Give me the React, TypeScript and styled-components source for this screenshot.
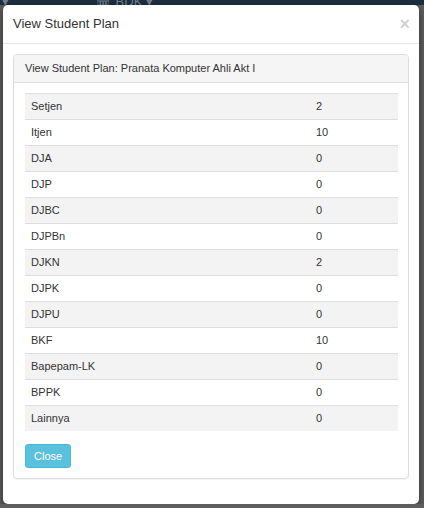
import styled, { createGlobalStyle } from 'styled-components';

const rows: { name: string; value: number }[] = [
  { name: 'Setjen', value: 2 },
  { name: 'Itjen', value: 10 },
  { name: 'DJA', value: 0 },
  { name: 'DJP', value: 0 },
  { name: 'DJBC', value: 0 },
  { name: 'DJPBn', value: 0 },
  { name: 'DJKN', value: 2 },
  { name: 'DJPK', value: 0 },
  { name: 'DJPU', value: 0 },
  { name: 'BKF', value: 10 },
  { name: 'Bapepam-LK', value: 0 },
  { name: 'BPPK', value: 0 },
  { name: 'Lainnya', value: 0 },
];

function App() {
  return (
    <>
      <GlobalStyle />
      <Navbar>
        <NavItem>▾</NavItem>
        <NavItem>🏛 BDK ▾</NavItem>
      </Navbar>
      <Modal>
        <Header>
          <Title>View Student Plan</Title>
          <CloseX>×</CloseX>
        </Header>
        <Body>
          <Panel>
            <PanelHeading>View Student Plan: Pranata Komputer Ahli Akt I</PanelHeading>
            <PanelBody>
              <Table>
                <tbody>
                  {rows.map((r, i) => (
                    <Row key={r.name} $striped={i % 2 === 0}>
                      <NameCell>{r.name}</NameCell>
                      <Cell>{r.value}</Cell>
                    </Row>
                  ))}
                </tbody>
              </Table>
              <Button>Close</Button>
            </PanelBody>
          </Panel>
        </Body>
      </Modal>
    </>
  );
}

export default App;

const GlobalStyle = createGlobalStyle`
  html, body {
    margin: 0;
    padding: 0;
    background-color: #5e5e5e;
    font-family: "Liberation Sans", Arial, sans-serif;
    color: #333;
  }
`;

const Navbar = styled.div`
  height: 5px;
  background-color: #1c2f40;
  display: flex;
  align-items: flex-end;
  gap: 86px;
  overflow: hidden;
  padding-left: 2px;
`;

const NavItem = styled.div`
  font-size: 13px;
  line-height: 6px;
  color: #6f7c88;
  white-space: nowrap;
`;

const Modal = styled.div`
  margin: 0 5px 0 3px;
  background-color: #fff;
  border-radius: 5px;
  box-shadow: 0 3px 9px rgba(0, 0, 0, 0.5);
  height: 499px;
  box-sizing: border-box;
  overflow: hidden;
`;

const Header = styled.div`
  display: flex;
  justify-content: space-between;
  align-items: flex-start;
  padding: 10px 9px 10px 10px;
  border-bottom: 1px solid #e5e5e5;
`;

const Title = styled.div`
  font-size: 13px;
  line-height: 18px;
  color: #333;
`;

const CloseX = styled.div`
  font-size: 18px;
  font-weight: bold;
  line-height: 14px;
  color: rgba(0, 0, 0, 0.2);
  margin-top: 2px;
`;

const Body = styled.div`
  padding: 10px;
`;

const Panel = styled.div`
  border: 1px solid #ddd;
  border-radius: 4px;
  box-shadow: 0 1px 1px rgba(0, 0, 0, 0.05);
`;

const PanelHeading = styled.div`
  background-color: #f5f5f5;
  border-bottom: 1px solid #ddd;
  border-radius: 3px 3px 0 0;
  padding: 6px 11px;
  font-size: 11px;
  line-height: 15px;
  color: #333;
`;

const PanelBody = styled.div`
  padding: 10px 10px 10px 11px;
`;

const Table = styled.table`
  width: 100%;
  border-collapse: collapse;
  font-size: 11px;
  margin-bottom: 13px;
`;

const Row = styled.tr<{ $striped: boolean }>`
  background-color: ${(p) => (p.$striped ? '#f3f3f4' : '#fff')};
`;

const Cell = styled.td`
  padding: 5px;
  line-height: 15px;
  border-top: 1px solid #ddd;
  color: #333;
`;

const NameCell = styled(Cell)`
  width: 275px;
  padding-left: 6px;
`;

const Button = styled.div`
  display: inline-block;
  background-color: #5bc0de;
  border: 1px solid #46b8da;
  border-radius: 3px;
  color: #fff;
  font-size: 11px;
  line-height: 14px;
  padding: 4px 8px;
  cursor: pointer;
`;
